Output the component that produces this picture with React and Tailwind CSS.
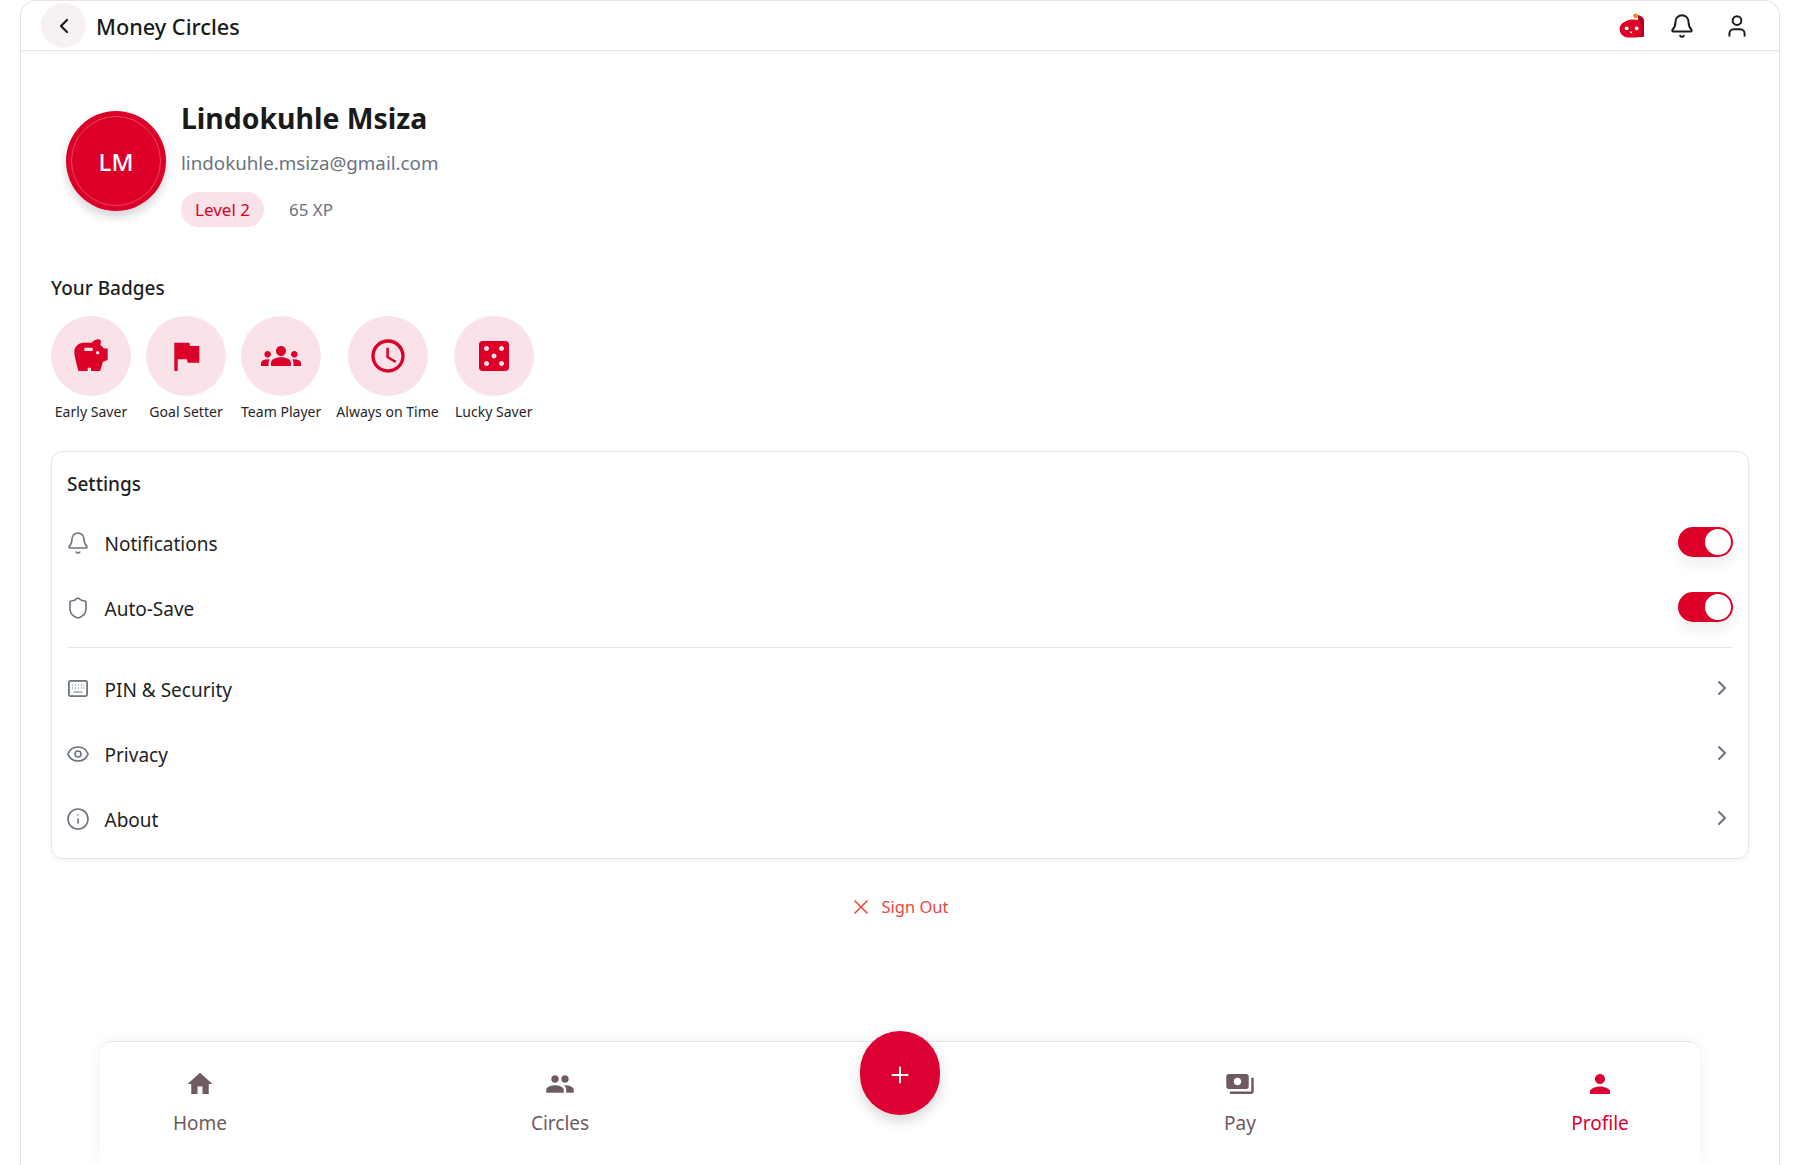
import React from "react";
import { ChevronLeft, ChevronRight, Bell, User, Shield, Eye, Info, X, Plus } from "lucide-react";
import { MdHome, MdPeople, MdPayments, MdPerson, MdSavings, MdFlag, MdGroups, MdSchedule, MdCasino } from "react-icons/md";

const FONT = { fontFamily: '"Noto Sans", "Open Sans", sans-serif' };

function Logo() {
  return (
    <svg width="26" height="26" viewBox="0 0 26 26" aria-hidden="true">
      <path d="M8.500 7.500C12 5.800 16 6.500 19 7c1-2 .5-3-2-4.500C21 2 25 4 25 8v15.500c-5 1-12 1-16 1-5 0-8.500-4.500-8.500-8.500s3.500-7 8-8.500z" fill="#dc0028" />
      <path d="M19 7c1-2 .5-3-2-4.500C21 2 25 4 25 8v15.500l-3 .5c1-6 1-13-3-17z" fill="#b30022" />
      <circle cx="16.500" cy="2.800" r="2.400" fill="#f98a1c" />
      <circle cx="7.700" cy="15.300" r="1.900" fill="#fff" />
      <circle cx="17.700" cy="15.300" r="1.900" fill="#fff" />
      <path d="M10.500 18.500h3l-1.500 2.300z" fill="#fff" />
    </svg>
  );
}

function KeyboardIcon() {
  return (
    <svg width="20" height="17" viewBox="0 0 20 17" fill="none" stroke="#6b7280" aria-hidden="true">
      <rect x="0.900" y="0.900" width="18.200" height="15.200" rx="1.500" strokeWidth="1.800" />
      <path d="M4 5h1M7 5h1M10 5h1M13 5h1M15.500 5h1M4 8h1M7 8h1M10 8h1M13 8h1M15.500 8h1M5.500 12h9" strokeWidth="1.200" />
    </svg>
  );
}

function Toggle() {
  return (
    <div className="-mt-[3px] w-[55px] h-[30px] rounded-full bg-[#dc0028] flex items-center justify-end pr-[2px] shadow-[0_8px_14px_rgba(0,0,0,0.07)]">
      <div className="w-[26px] h-[26px] rounded-full bg-white" />
    </div>
  );
}

function Badge({ icon: Icon, label, size = 40 }) {
  return (
    <div className="flex flex-col items-center">
      <div className="w-[80px] h-[80px] rounded-full bg-[#fae3e8] flex items-center justify-center text-[#dc0028]">
        <Icon size={size} />
      </div>
      <span className="mt-[4px] text-[14.050px] leading-[24px] text-[#27272a]">{label}</span>
    </div>
  );
}

function Row({ icon, label, right }) {
  return (
    <div className="h-[65px] flex items-center justify-between">
      <div className="flex items-center">
        <div className="w-[24px] -ml-[1px] flex justify-center -mt-[2px]">{icon}</div>
        <span className="ml-[14.500px] text-[19px] leading-[28px] text-[#1f1f23]">{label}</span>
      </div>
      {right}
    </div>
  );
}

function NavItem({ icon: Icon, label, active }) {
  return (
    <div className={`flex flex-col items-center ${active ? "text-[#dc0033]" : "text-[#6f5b5f]"}`}>
      <Icon size={30} />
      <span className="mt-[11px] text-[19px] leading-[26px]">{label}</span>
    </div>
  );
}

const chevron = <ChevronRight size={24} color="#6b7280" strokeWidth={2} className="-mr-[1px] -mt-[4px]" />;
const iconProps = { size: 24, color: "#6b7280", strokeWidth: 1.600 };

export default function App() {
  return (
    <div style={FONT} className="h-[1165px] bg-white px-[20px] overflow-hidden">
      <div className="relative h-full border-x border-t border-[#eee2e6] rounded-t-[16px] flex flex-col">
        <header className="h-[50px] shrink-0 border-b border-[#eee2e6] flex items-center justify-between pl-[20px] pr-[29px] shadow-[0_1px_2px_rgba(0,0,0,0.03)]">
          <div className="flex items-center">
            <div className="w-[45px] h-[45px] rounded-full bg-[#f7f1f2] flex items-center justify-center text-[#1a1a1a]">
              <ChevronLeft size={24} strokeWidth={2.200} />
            </div>
            <span className="ml-[10px] mt-[2px] text-[21.700px] leading-[30px] font-medium text-[#1a1a1a]">Money Circles</span>
          </div>
          <div className="flex items-center text-[#1a1a1a]">
            <Logo />
            <Bell size={26} strokeWidth={1.800} className="ml-[24px]" />
            <User size={26} strokeWidth={1.800} className="ml-[29px]" />
          </div>
        </header>

        <main className="flex-1 px-[30px]">
          <section className="flex pt-[45px] pl-[15px]">
            <div className="mt-[15px] w-[100px] h-[100px] rounded-full bg-[#dc0028] shadow-[0_6px_10px_rgba(0,0,0,0.16)] p-[5px]">
              <div className="w-full h-full pt-[2px] rounded-full border border-[#e8445f] flex items-center justify-center text-white text-[24px] font-medium">LM</div>
            </div>
            <div className="ml-[15px]">
              <h1 className="text-[28.400px] leading-[44px] font-bold text-[#1a1a1a]">Lindokuhle Msiza</h1>
              <p className="mt-[3px] text-[18.750px] leading-[40px] text-[#6b7280]">lindokuhle.msiza@gmail.com</p>
              <div className="mt-[9px] flex items-center">
                <span className="w-[83px] h-[35px] rounded-full bg-[#fae3e8] flex items-center justify-center text-[17px] text-[#dc0028]">Level 2</span>
                <span className="ml-[25px] text-[17px] text-[#6b7280]">65 XP</span>
              </div>
            </div>
          </section>

          <h2 className="mt-[42px] text-[19px] leading-[38px] font-medium text-[#1f1f23]">Your Badges</h2>
          <div className="mt-[9px] flex gap-[15px]">
            <Badge icon={MdSavings} label="Early Saver" />
            <Badge icon={MdFlag} label="Goal Setter" />
            <Badge icon={MdGroups} label="Team Player" />
            <Badge icon={MdSchedule} label="Always on Time" />
            <Badge icon={MdCasino} label="Lucky Saver" />
          </div>

          <section className="mt-[27px] h-[408px] border border-[#eee2e6] rounded-[12px] px-[15px] shadow-[0_2px_3px_rgba(0,0,0,0.05)]">
            <h2 className="h-[59px] pt-[5px] flex items-center text-[19px] font-medium text-[#1f1f23]">Settings</h2>
            <Row icon={<Bell {...iconProps} />} label="Notifications" right={<Toggle />} />
            <Row icon={<Shield {...iconProps} />} label="Auto-Save" right={<Toggle />} />
            <div className="mt-[6px] mb-[9px] h-px bg-[#eee2e6]" />
            <Row icon={<KeyboardIcon />} label="PIN & Security" right={chevron} />
            <Row icon={<Eye {...iconProps} />} label="Privacy" right={chevron} />
            <Row icon={<Info {...iconProps} />} label="About" right={chevron} />
          </section>

          <button className="mt-[33px] w-full pr-[3px] flex items-center justify-center text-[#ef4444]">
            <X size={24} strokeWidth={1.600} />
            <span className="ml-[9px] text-[16.500px] leading-[30px]">Sign Out</span>
          </button>
        </main>

        <nav className="absolute left-[79px] right-[79px] bottom-0 h-[124px] bg-white border-t border-[#eee2e6] rounded-t-[12px] shadow-[0_0_16px_rgba(0,0,0,0.06)] pt-[27px] grid grid-cols-[200px_520px_160px_520px_200px]">
          <NavItem icon={MdHome} label="Home" />
          <NavItem icon={MdPeople} label="Circles" />
          <div className="flex justify-center">
            <div className="-mt-[38px] w-[80px] h-[84px] rounded-full bg-[#dc0033] text-white flex items-center justify-center shadow-[0_6px_14px_rgba(0,0,0,0.16)]">
              <Plus size={26} strokeWidth={1.800} className="mt-[3px]" />
            </div>
          </div>
          <NavItem icon={MdPayments} label="Pay" />
          <NavItem icon={MdPerson} label="Profile" active />
        </nav>
      </div>
    </div>
  );
}
